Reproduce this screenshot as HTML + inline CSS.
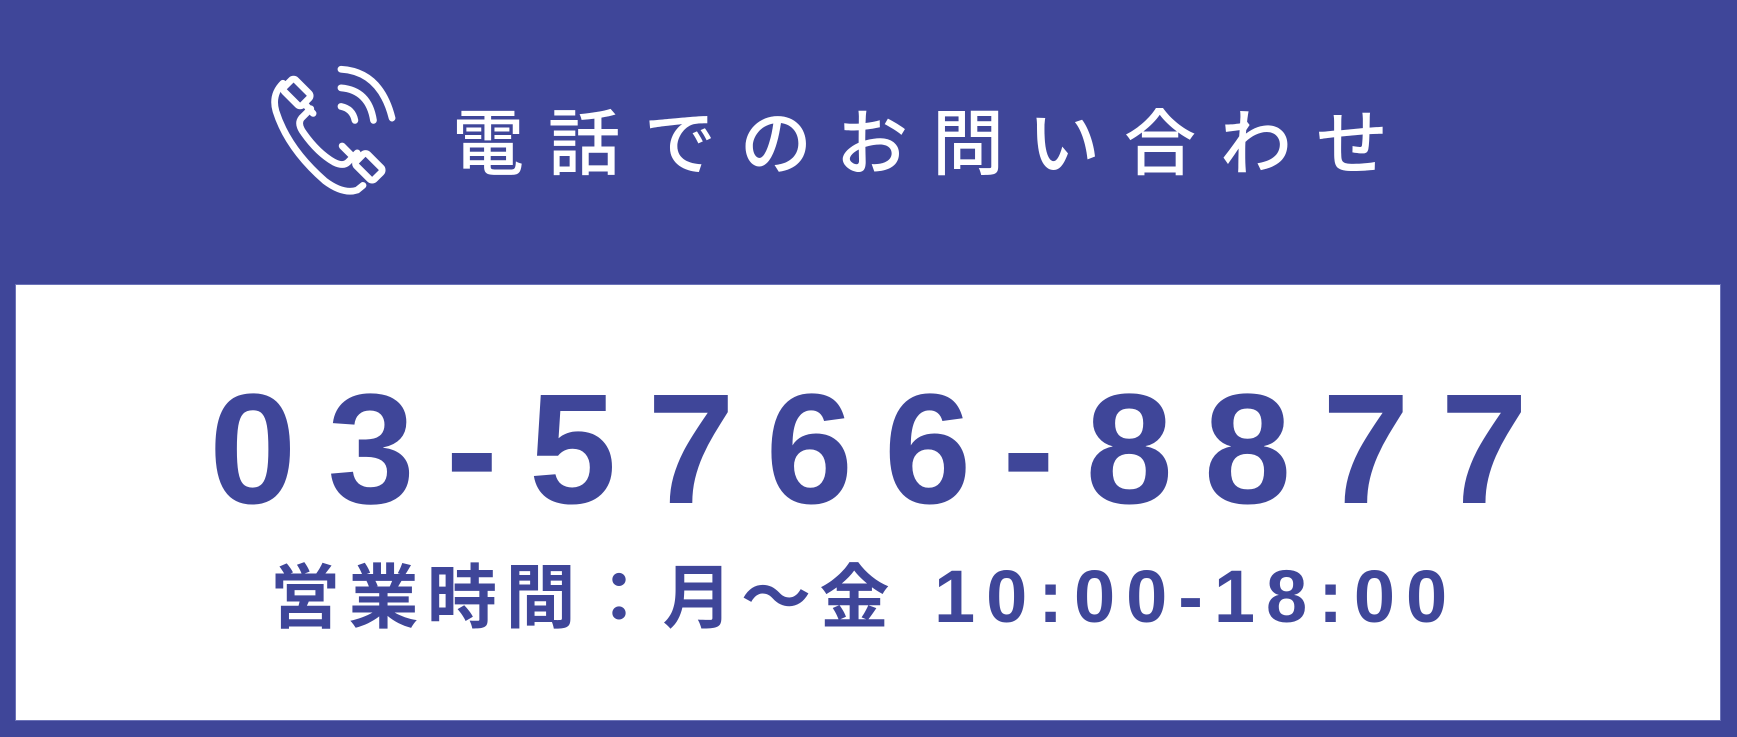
<!DOCTYPE html>
<html><head><meta charset="utf-8"><style>
html,body{margin:0;padding:0}
body{width:1737px;height:737px;background:#3f4699;position:relative;overflow:hidden;font-family:"Liberation Sans","Noto Sans CJK JP",sans-serif}
.box{position:absolute;left:16px;top:285px;width:1704px;height:435px;background:#fff;box-shadow:0 0 0 1px #6c73b8}
.title{position:absolute;left:452px;top:88px;font-size:72px;font-weight:500;color:#fff;letter-spacing:24px;white-space:nowrap;line-height:100px;font-family:"Noto Sans CJK JP",sans-serif}
.tel{position:absolute;left:0;width:1737px;text-align:center;top:370px;font-size:157px;font-weight:bold;color:#3f4699;letter-spacing:31px;line-height:160px;white-space:nowrap;padding-left:31px;box-sizing:border-box}
.hours{position:absolute;left:270px;top:550px;font-size:70px;font-weight:bold;color:#3f4699;white-space:nowrap;line-height:86px;font-family:"Noto Sans CJK JP",sans-serif;letter-spacing:8.5px}
.hours .n{font-family:"Liberation Sans",sans-serif;letter-spacing:11px;font-size:74px;margin-left:36px}
</style></head><body>
<svg style="position:absolute;left:262px;top:60px" width="144" height="144" viewBox="0 0 124 124" fill="none" stroke="#fff" stroke-width="5.8" stroke-linecap="round" stroke-linejoin="round">
<path d="M42 42 L34 50 Q30 55 36 63 Q48 80 62 88 Q70 92 74 88 L82 80"/>
<rect x="-11" y="-7" width="22" height="14" rx="3" transform="translate(30 28) rotate(45)"/>
<rect x="-11" y="-7" width="22" height="14" rx="3" transform="translate(92 92) rotate(45)"/>
<path d="M18 20 Q8 30 12 44 Q22 76 54 104 Q70 116 82 112 L87 108"/>
<path d="M37 38 L44 46"/>
<path d="M69 74 L77 82"/>
<path d="M68 8 Q102 10 112 50"/>
<path d="M68 24 Q92 26 96 52"/>
<path d="M68 40 Q78 42 80 52"/>
</svg>
<div class="title">電話でのお問い合わせ</div>
<div class="box"></div>
<div class="tel">03-5766-8877</div>
<div class="hours">営業時間：月〜金<span class="n">10:00-18:00</span></div>
</body></html>
